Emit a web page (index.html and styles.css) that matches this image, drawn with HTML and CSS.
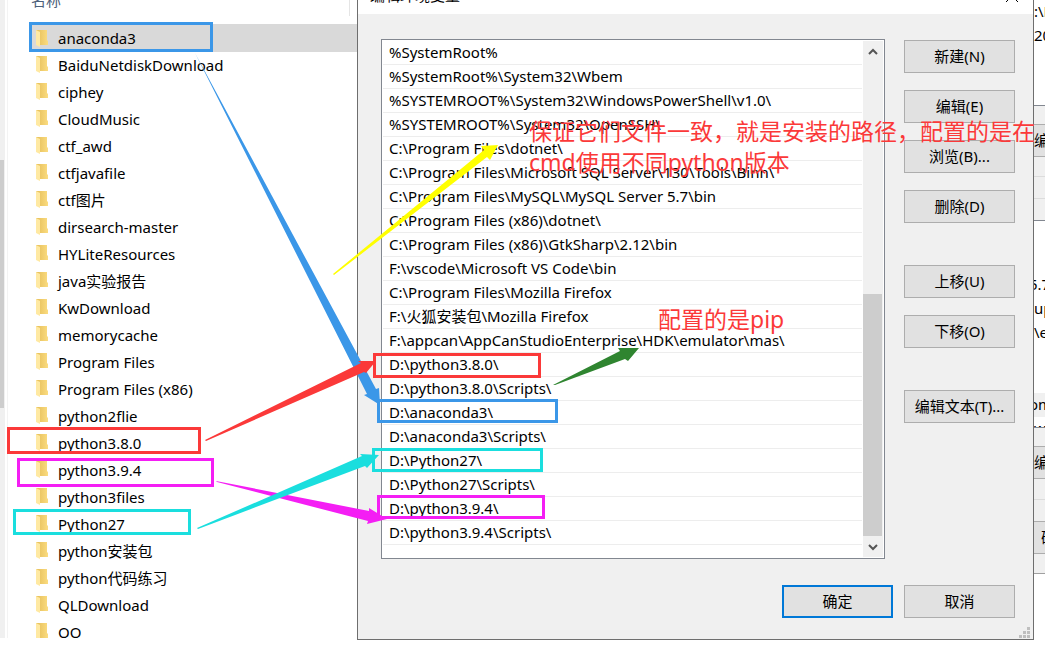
FILE: index.html
```html
<!DOCTYPE html>
<html lang="zh-CN">
<head>
    <meta charset="UTF-8">
    <meta name="viewport" content="width=device-width, initial-scale=1.0">
    <title>编辑环境变量</title>
    <link rel="stylesheet" href="styles.css">
</head>
<body>
    <svg class="defs" width="0" height="0" aria-hidden="true">
        <linearGradient id="back" x1="0" x2="1" y1="0" y2="0">
            <stop offset="0" stop-color="#e4bd58"/>
            <stop offset="1" stop-color="#fbdc80"/>
        </linearGradient>
        <symbol id="folder" viewBox="0 0 12 17">
            <path d="M0 0H11V10L12 11V15H3Z" fill="url(#back)"/>
            <path d="M0 0L4 2V17L0 15Z" fill="#ffe9a2"/>
        </symbol>
    </svg>
    <div class="desktop">
        <nav class="explorer">
            <div class="side-scroll"><div class="side-thumb"></div></div>
            <div class="files">
                <div class="column-head">名称</div>
                <ul class="file-list">
                    <li class="selected"><svg class="icon"><use href="#folder"/></svg>anaconda3</li>
                    <li><svg class="icon"><use href="#folder"/></svg>BaiduNetdiskDownload</li>
                    <li><svg class="icon"><use href="#folder"/></svg>ciphey</li>
                    <li><svg class="icon"><use href="#folder"/></svg>CloudMusic</li>
                    <li><svg class="icon"><use href="#folder"/></svg>ctf_awd</li>
                    <li><svg class="icon"><use href="#folder"/></svg>ctfjavafile</li>
                    <li><svg class="icon"><use href="#folder"/></svg>ctf图片</li>
                    <li><svg class="icon"><use href="#folder"/></svg>dirsearch-master</li>
                    <li><svg class="icon"><use href="#folder"/></svg>HYLiteResources</li>
                    <li><svg class="icon"><use href="#folder"/></svg>java实验报告</li>
                    <li><svg class="icon"><use href="#folder"/></svg>KwDownload</li>
                    <li><svg class="icon"><use href="#folder"/></svg>memorycache</li>
                    <li><svg class="icon"><use href="#folder"/></svg>Program Files</li>
                    <li><svg class="icon"><use href="#folder"/></svg>Program Files (x86)</li>
                    <li><svg class="icon"><use href="#folder"/></svg>python2flie</li>
                    <li><svg class="icon"><use href="#folder"/></svg>python3.8.0</li>
                    <li><svg class="icon"><use href="#folder"/></svg>python3.9.4</li>
                    <li><svg class="icon"><use href="#folder"/></svg>python3files</li>
                    <li><svg class="icon"><use href="#folder"/></svg>Python27</li>
                    <li><svg class="icon"><use href="#folder"/></svg>python安装包</li>
                    <li><svg class="icon"><use href="#folder"/></svg>python代码练习</li>
                    <li><svg class="icon"><use href="#folder"/></svg>QLDownload</li>
                    <li><svg class="icon"><use href="#folder"/></svg>QQ</li>
                </ul>
            </div>
        </nav>

        <main class="dialog">
            <header class="titlebar">
                <span>编辑环境变量</span>
                <button class="close" aria-label="关闭"><svg width="12" height="12" viewBox="0 0 12 12"><path d="M0 0L12 12M12 0L0 12" stroke="#000"/></svg></button>
            </header>
            <div class="content">
                <div class="list-box">
                    <ul class="paths">
                        <li>%SystemRoot%</li>
                        <li>%SystemRoot%\System32\Wbem</li>
                        <li>%SYSTEMROOT%\System32\WindowsPowerShell\v1.0\</li>
                        <li>%SYSTEMROOT%\System32\OpenSSH\</li>
                        <li>C:\Program Files\dotnet\</li>
                        <li>C:\Program Files\Microsoft SQL Server\130\Tools\Binn\</li>
                        <li>C:\Program Files\MySQL\MySQL Server 5.7\bin</li>
                        <li>C:\Program Files (x86)\dotnet\</li>
                        <li>C:\Program Files (x86)\GtkSharp\2.12\bin</li>
                        <li>F:\vscode\Microsoft VS Code\bin</li>
                        <li>C:\Program Files\Mozilla Firefox</li>
                        <li>F:\火狐安装包\Mozilla Firefox</li>
                        <li>F:\appcan\AppCanStudioEnterprise\HDK\emulator\mas\</li>
                        <li>D:\python3.8.0\</li>
                        <li>D:\python3.8.0\Scripts\</li>
                        <li>D:\anaconda3\</li>
                        <li>D:\anaconda3\Scripts\</li>
                        <li>D:\Python27\</li>
                        <li>D:\Python27\Scripts\</li>
                        <li>D:\python3.9.4\</li>
                        <li>D:\python3.9.4\Scripts\</li>
                    </ul>
                    <div class="scrollbar">
                        <button class="arrow" aria-label="向上滚动"><svg width="10" height="8" viewBox="0 0 10 8"><path d="M1 6L5 2L9 6" fill="none" stroke="#555" stroke-width="2"/></svg></button>
                        <div class="track"><div class="thumb"></div></div>
                        <button class="arrow" aria-label="向下滚动"><svg width="10" height="8" viewBox="0 0 10 8"><path d="M1 2L5 6L9 2" fill="none" stroke="#555" stroke-width="2"/></svg></button>
                    </div>
                </div>
                <div class="actions">
                    <div class="group">
                        <button class="btn">新建(N)</button>
                        <button class="btn">编辑(E)</button>
                        <button class="btn">浏览(B)...</button>
                        <button class="btn">删除(D)</button>
                    </div>
                    <div class="group">
                        <button class="btn">上移(U)</button>
                        <button class="btn">下移(O)</button>
                    </div>
                    <div class="group">
                        <button class="btn">编辑文本(T)...</button>
                    </div>
                </div>
            </div>
            <footer class="footer">
                <button class="btn default">确定</button>
                <button class="btn">取消</button>
            </footer>
            <svg class="grip" width="11" height="11" viewBox="0 0 11 11" fill="#bfbfbf"><path d="M8 0h3v3h-3zM4 4h3v3h-3zM8 4h3v3h-3zM0 8h3v3h-3zM4 8h3v3h-3zM8 8h3v3h-3z"/></svg>
        </main>

        <!-- window behind the dialog -->
        <aside class="behind">
            <div class="pane user">
                <div>:\P</div>
                <div>20</div>
            </div>
            <div class="bar user-bar"><button class="edge-btn">编</button></div>
            <div class="gap-line"></div>
            <div class="pane system">
                <div class="cut">5.7</div>
                <div>up</div>
                <div>\e</div>
                <div></div>
                <div></div>
                <div class="hl cut">om</div>
                <div>w</div>
            </div>
            <div class="bar system-bar"><button class="edge-btn">编</button></div>
            <div class="bar ok-bar"><button class="edge-btn ok">确</button></div>
        </aside>

        <!-- notes drawn over the windows -->
        <svg class="marks" width="1045" height="645" viewBox="0 0 1045 645">
            <polygon fill="#ffff00" points="333,274 484,150 481,146 498,145 490,160 487,157 334,275"/>
            <polygon fill="#2f8530" points="553,385 620,351 618,348 639,348 628,361 625,359 555,385"/>
            <polygon fill="#3b97e8" points="195,53 376,389 379,388 380,405 364,395 367,394"/>
            <polygon fill="#fb3939" points="205,440 361,363 358,361 376,361 366,373 364,372 206,441"/>
            <polygon fill="#f41ef4" points="216,481 369,511 369,508 387,519 367,524 368,521 217,482"/>
            <polygon fill="#1adede" points="197,528 362,456 360,454 379,455 367,468 365,466 198,529"/>
            <g fill="none" stroke-width="3">
                <rect x="30.5" y="23.5" width="181" height="27" stroke="#3b97e8"/>
                <rect x="8.5" y="428.5" width="191" height="24" stroke="#fb3939"/>
                <rect x="18.5" y="459.5" width="194" height="26" stroke="#f41ef4"/>
                <rect x="14.5" y="510.5" width="175" height="23" stroke="#1adede"/>
                <rect x="374.5" y="354.5" width="165" height="22" stroke="#fb3939"/>
                <rect x="378.5" y="400.5" width="178" height="21" stroke="#3b97e8"/>
                <rect x="373.5" y="449.5" width="168" height="21" stroke="#1adede"/>
                <rect x="378.5" y="496.5" width="165" height="21" stroke="#f41ef4"/>
            </g>
        </svg>
        <p class="note note-path">保证它们文件一致，就是安装的路径，配置的是在<br>cmd使用不同python版本</p>
        <p class="note note-pip">配置的是pip</p>
    </div>
</body>
</html>
```

FILE: styles.css
```css
* {
    box-sizing: border-box;
}

body {
    margin: 0;
    background-color: white;
    color: black;
    font-family: "Noto Sans", "Noto Sans CJK SC", sans-serif;
    font-size: 15px;
    overflow: hidden;
}

ul {
    list-style: none;
    margin: 0;
    padding: 0;
}

button {
    font: inherit;
    color: inherit;
    padding: 0;
}

.defs {
    position: absolute;
}

.desktop {
    position: relative;
    display: grid;
    grid-template-columns: 357px 1fr 11px;
    align-items: start;
}

/* explorer */
.explorer {
    display: flex;
    height: 638px;
    overflow: hidden;
}

.side-scroll {
    width: 5px;
    background-color: #f0f0f0;
    padding-top: 160px;
}

.side-thumb {
    width: 4px;
    height: 248px;
    background-color: #cdcdcd;
}

.files {
    flex: 1;
    margin-left: 2px;
    padding-left: 21px;
    border-left: 1px solid #f3f3f3;
}

.column-head {
    height: 16px;
    margin: 0 7px 8px 0;
    padding-left: 2px;
    border-right: 1px solid #e5e5e5;
    color: #4c607a;
    line-height: 0;
}

.file-list li {
    display: flex;
    align-items: center;
    gap: 10px;
    height: 27px;
    padding-left: 7px;
    white-space: nowrap;
}

.file-list .selected {
    height: 28px;
    margin-bottom: -1px;
    background-color: #d9d9d9;
}

.icon {
    width: 12px;
    height: 17px;
}

/* dialog */
.dialog {
    position: relative;
    height: 640px;
    background-color: #f0f0f0;
    border: 1px solid #6e6e6e;
    border-top: none;
}

.titlebar {
    display: flex;
    justify-content: space-between;
    height: 14px;
    padding: 0 15px 0 12px;
    background-color: white;
    line-height: 20px;
    overflow: hidden;
}

.titlebar span {
    margin-top: -15px;
}

.close {
    width: 12px;
    height: 12px;
    margin-top: -10px;
    border: none;
    background: none;
    line-height: 0;
}

.content {
    display: flex;
    gap: 19px;
    padding: 25px 18px 0 23px;
}

.list-box {
    flex: 1;
    display: flex;
    height: 520px;
    padding: 1px;
    border: 1px solid #828790;
    background-color: white;
}

.paths {
    flex: 1;
    margin-right: 1px;
}

.paths li {
    height: 24px;
    padding-left: 6px;
    border-bottom: 1px solid #ededed;
    line-height: 23px;
    white-space: nowrap;
}

.scrollbar {
    display: flex;
    flex-direction: column;
    width: 20px;
    background-color: #f0f0f0;
}

.arrow {
    height: 21px;
    border: none;
    background: none;
    line-height: 0;
}

.track {
    display: flex;
    flex-direction: column;
    justify-content: flex-end;
    flex: 1;
}

.thumb {
    width: 19px;
    height: 51%;
    background-color: #cdcdcd;
}

.actions {
    display: flex;
    flex-direction: column;
    gap: 42px;
    padding-top: 1px;
}

.group {
    display: flex;
    flex-direction: column;
    gap: 17px;
}

.btn {
    width: 111px;
    height: 33px;
    padding-bottom: 2px;
    border: 1px solid #adadad;
    background-color: #e1e1e1;
}

.default {
    border: 2px solid #0078d7;
}

.footer {
    display: flex;
    justify-content: flex-end;
    gap: 11px;
    padding: 26px 18px 0 0;
}

.grip {
    position: absolute;
    right: 3px;
    bottom: 1px;
}

/* sliver of the parent window */
.behind {
    overflow: hidden;
    border-bottom: 1px solid #a0a0a0;
    background-color: #f0f0f0;
    white-space: nowrap;
}

.pane {
    border-bottom: 1px solid #828790;
    background-color: white;
    line-height: 23px;
    overflow: hidden;
}

.pane div {
    height: 24px;
}

.user {
    height: 106px;
}

.system {
    height: 207px;
    padding-top: 52px;
}

.hl {
    background-color: #f0f0f0;
}

.cut {
    text-indent: -5px;
}

.bar {
    padding-top: 18px;
    border-bottom: 1px solid #dcdcdc;
}

.user-bar {
    height: 71px;
}

.gap-line {
    height: 44px;
    border-top: 21px solid #f0f0f0;
    border-bottom: 1px solid #828790;
    background: linear-gradient(#dcdcdc 1px, #f0f0f0 1px);
}

.system-bar {
    height: 72px;
}

.ok-bar {
    height: 73px;
    padding-top: 21px;
    border-bottom: none;
}

.edge-btn {
    display: block;
    width: 40px;
    height: 33px;
    padding-bottom: 2px;
    border: 1px solid #adadad;
    border-left: none;
    background-color: #e1e1e1;
    text-align: left;
}

.ok {
    padding-left: 7px;
}

/* notes */
.marks {
    position: absolute;
    top: 0;
    left: 0;
}

.note {
    position: absolute;
    margin: 0;
    color: #fb3939;
    font-size: 23px;
    line-height: 31px;
    white-space: nowrap;
}

.note-path {
    left: 529px;
    top: 116px;
}

.note-pip {
    left: 658px;
    top: 304px;
}
```
